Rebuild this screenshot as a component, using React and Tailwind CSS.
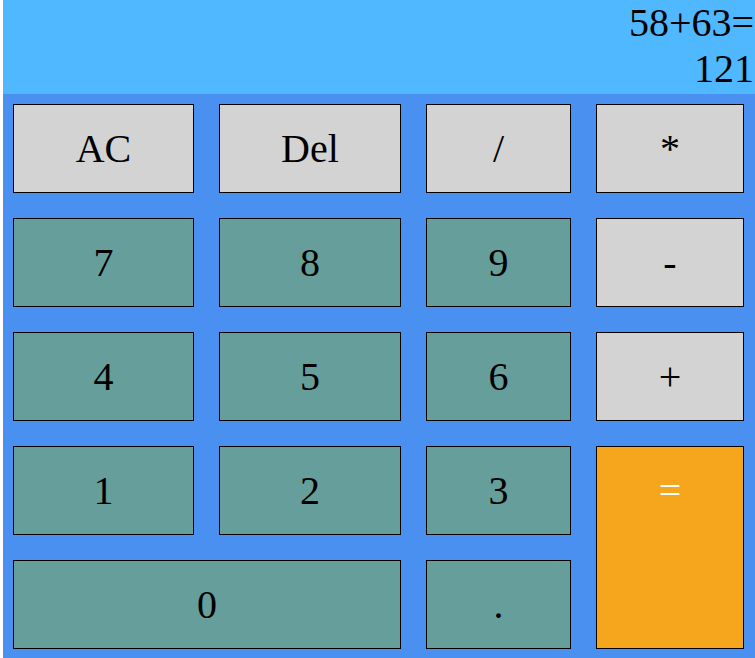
export default function App() {
  const keys = [
    { label: 'AC', tone: 'gray' },
    { label: 'Del', tone: 'gray' },
    { label: '/', tone: 'gray' },
    { label: '*', tone: 'gray' },
    { label: '7', tone: 'teal' },
    { label: '8', tone: 'teal' },
    { label: '9', tone: 'teal' },
    { label: '-', tone: 'gray' },
    { label: '4', tone: 'teal' },
    { label: '5', tone: 'teal' },
    { label: '6', tone: 'teal' },
    { label: '+', tone: 'gray' },
    { label: '1', tone: 'teal' },
    { label: '2', tone: 'teal' },
    { label: '3', tone: 'teal' },
    { label: '=', tone: 'orange' },
    { label: '0', tone: 'teal', wide: true },
    { label: '.', tone: 'teal' },
  ]

  const toneClass = {
    gray: 'bg-[#d3d3d3] text-black items-center',
    teal: 'bg-[#669e9b] text-black items-center',
    orange: 'bg-[#f5a61c] text-white row-span-2 items-start',
  }

  return (
    <div className="ml-[3px] w-[752px] font-['Liberation_Serif',serif]">
      {/* display */}
      <div className="h-[94px] bg-[#50b8ff] pr-[1px] text-right text-[40px] leading-[46px] text-black">
        <div>58+63=</div>
        <div>121</div>
      </div>

      {/* keypad */}
      <div className="grid grid-cols-[181px_182px_145px_148px] auto-rows-[89px] gap-[25px] bg-[#4a90f0] pt-[10px] pb-[10px] pl-[10px]">
        {keys.map((k) => (
          <button
            key={k.label}
            className={`flex justify-center border border-black text-[40px] leading-[46px] ${toneClass[k.tone]} ${k.wide ? 'col-span-2' : ''}`}
          >
            {k.tone === 'orange' ? (
              <span className="flex h-[87px] items-center">{k.label}</span>
            ) : (
              k.label
            )}
          </button>
        ))}
      </div>
    </div>
  )
}
